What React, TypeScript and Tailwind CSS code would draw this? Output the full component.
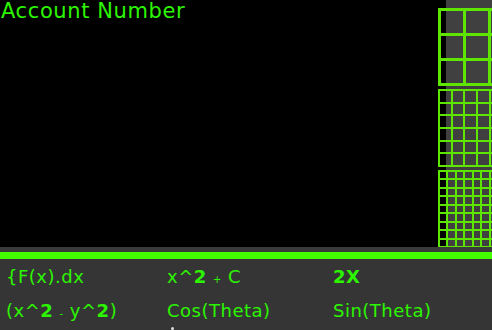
import React from "react";

const GREEN_TEXT = "text-[#2cf500]";

function Grid({ n, line }: { n: number; line: number }) {
  const cells = Array.from({ length: n * n });
  const cols =
    n === 3 ? "grid-cols-3 grid-rows-3" : n === 6 ? "grid-cols-6 grid-rows-6" : "grid-cols-9 grid-rows-9";
  const outer = line === 3 ? "border-l-[3px] border-t-[3px]" : "border-l-2 border-t-2";
  const inner = line === 3 ? "border-r-[3px] border-b-[3px]" : "border-r-2 border-b-2";
  return (
    <div className={`grid ${cols} ${outer} border-[#5ee600] w-[78px] h-[78px] shrink-0`}>
      {cells.map((_, i) => (
        <div key={i} className={`${inner} border-[#5ee600]`} />
      ))}
    </div>
  );
}

export default function App() {
  const font = { fontFamily: '"DejaVu Sans", sans-serif' };
  return (
    <div className="w-[492px] h-[330px] bg-black flex flex-col overflow-hidden" style={font}>
      <div className="flex h-[247px] shrink-0">
        <div className="flex-1">
          <div className={`${GREEN_TEXT} text-[21px] leading-[22px] tracking-[0.6px] pl-[1px]`}>
            Account Number
          </div>
        </div>
        <div className="w-[55px] shrink-0 h-[247px] bg-[#404040] border-l-[9px] border-solid border-black">
          <div className="-ml-[8px] flex flex-col gap-[3px] pt-[8px]">
            <Grid n={3} line={3} />
            <Grid n={6} line={2} />
            <Grid n={9} line={2} />
          </div>
        </div>
      </div>
      <div className="h-[5px] shrink-0 bg-[#3a3a3a]" />
      <div className="h-[7px] shrink-0 bg-[#44ff00]" />
      <div className="flex-1 bg-[#353535] relative">
        <div className={`grid grid-cols-[161px_166px_1fr] pl-[6px] pt-[2px] ${GREEN_TEXT} text-[18px] leading-[31px] tracking-[0.5px]`}>
          <div>{"{F(x).dx"}</div>
          <div>
            x^<b>2</b> <span className="text-[10px]">+</span> C
          </div>
          <div>
            <b>2X</b>
          </div>
          <div>
            (x^<b>2</b> <span className="text-[10px]">-</span> y^<b>2</b>)
          </div>
          <div>Cos(Theta)</div>
          <div>Sin(Theta)</div>
        </div>
        <div className="absolute left-[171px] top-[68px] w-[3px] h-[3px] bg-[#dddddd] rounded-full" />
      </div>
    </div>
  );
}
